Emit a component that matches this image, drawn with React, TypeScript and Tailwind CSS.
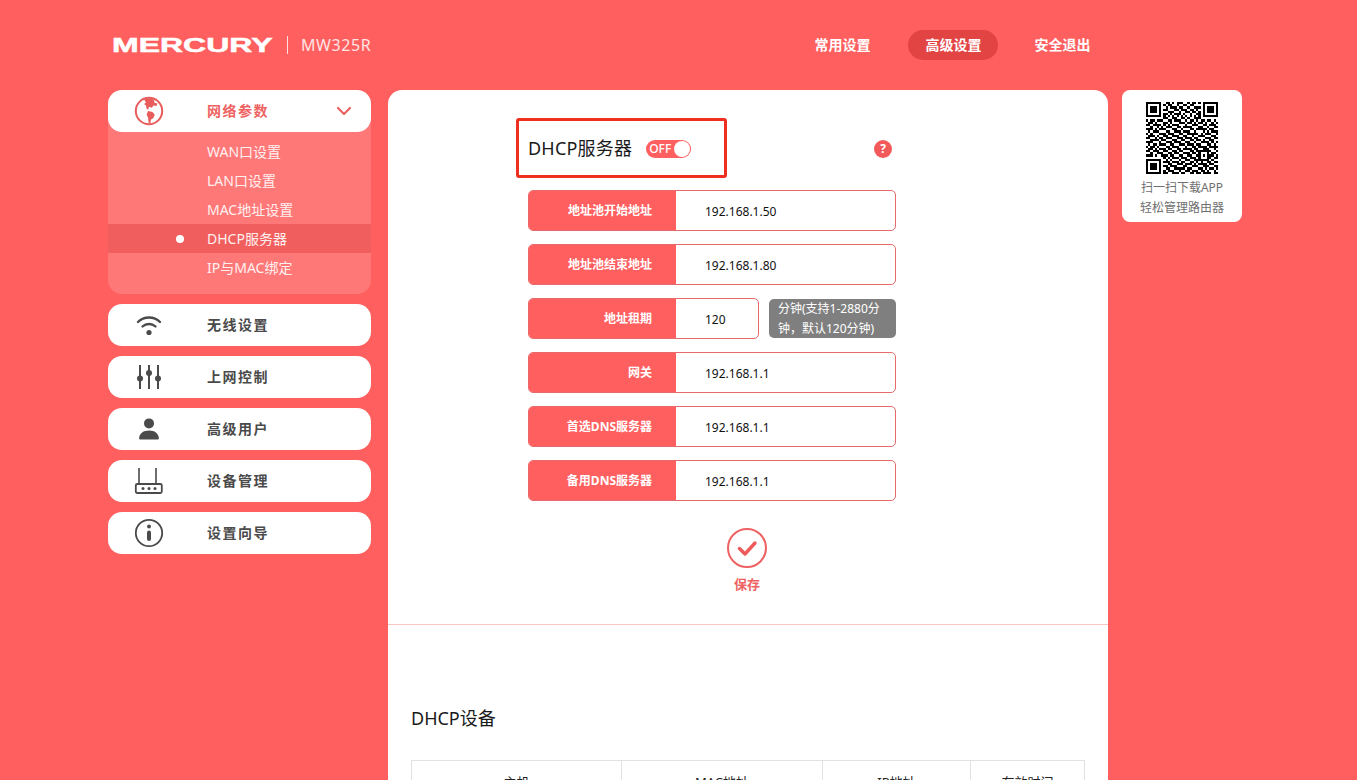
import React from 'react';
import { ChevronDown } from 'lucide-react';

const font = { fontFamily: '"Noto Sans", "Noto Sans CJK SC", sans-serif' };

const GlobeIcon = () => (
    <svg width="30" height="30" viewBox="0 0 30 30" fill="none">
        <circle cx="15" cy="15" r="13.2" stroke="#e85c5c" strokeWidth="2" />
        <path d="M10 3.500c3-1.200 7-1.400 10 .2l.5 3 3 .8-1 2.500-3-.5-1.700 2.300-2.800-1-.8 3-1.700-1.200-.5-3.200L10 8l2-1.500z" fill="#e85c5c" />
        <path d="M14 15l4.500 1 2.300 2.800-1.600 3.500-2.200 1.200-.6 3.600-1.700-.2-.7-5.500-1.400-2.600z" fill="#e85c5c" />
    </svg>
);

const WifiIcon = () => (
    <svg width="26" height="22" viewBox="0 0 26 22" fill="none" stroke="#4a4a4a" strokeWidth="2.4" strokeLinecap="round">
        <path d="M2 8c6-6 16-6 22 0" />
        <path d="M6.5 12.5c3.6-3.4 9.4-3.4 13 0" />
        <circle cx="13" cy="18.5" r="2.6" fill="#4a4a4a" stroke="none" />
    </svg>
);

const SlidersIcon = () => (
    <svg width="26" height="26" viewBox="0 0 26 26" fill="#4a4a4a">
        <rect x="3" y="1" width="2" height="24" />
        <rect x="12" y="1" width="2" height="24" />
        <rect x="21" y="1" width="2" height="24" />
        <circle cx="4" cy="14.5" r="3" />
        <circle cx="13" cy="9" r="3" />
        <circle cx="22" cy="14.5" r="3" />
    </svg>
);

const UserIcon = () => (
    <svg width="20" height="22" viewBox="0 0 20 22" fill="#4a4a4a">
        <circle cx="10" cy="5.4" r="5" />
        <path d="M1 21.5c-.8 0-1-.8-.8-2 .6-4.2 4-7 9.800-7s9.200 2.800 9.800 7c.2 1.200 0 2-.8 2z" />
    </svg>
);

const RouterIcon = () => (
    <svg width="30" height="28" viewBox="0 0 30 28" fill="none">
        <path d="M5 1v16M22 1v16" stroke="#4a4a4a" strokeWidth="1.6" />
        <rect x="1.800" y="17" width="26" height="9" rx="1.500" stroke="#4a4a4a" strokeWidth="1.800" />
        <circle cx="9" cy="21.500" r="1.500" fill="#4a4a4a" />
        <circle cx="15" cy="21.500" r="1.500" fill="#4a4a4a" />
        <circle cx="21" cy="21.500" r="1.500" fill="#4a4a4a" />
    </svg>
);

const InfoIcon = () => (
    <svg width="30" height="30" viewBox="0 0 30 30" fill="none">
        <circle cx="15" cy="15" r="13.200" stroke="#4a4a4a" strokeWidth="1.800" />
        <circle cx="15" cy="8.500" r="1.900" fill="#4a4a4a" />
        <rect x="13" y="12.500" width="4" height="10.500" rx="2" fill="#4a4a4a" />
    </svg>
);

const QR = [
    '111111100110101110010110101111111',
    '100000101011001001101100001000001',
    '101110100101110110010011101011101',
    '101110101100011011101101001011101',
    '101110100011100100110110101011101',
    '100000101101011101001001101000001',
    '111111101010101010101010101111111',
    '000000001100110011010011100000000',
    '101101110011011100101101011011010',
    '011010001101000111011010110100101',
    '110111101010111000100111001101110',
    '001001010111001101111000110010011',
    '111010111000110010001101111101100',
    '010111000110011101110010001010111',
    '101000111011100110011111010111001',
    '011101001100111001100100111000110',
    '110010110111001110111011000111011',
    '001111011000110011001101101001100',
    '111000100111011100110010011110101',
    '010110111001100111011101100011010',
    '101101000110111000100110111101111',
    '011010111011001101111011001110010',
    '110111001100110110001101111111001',
    '001001110011011001110110100010110',
    '111010011101100110011001101011101',
    '000000001010111011101110100011011',
    '111111100101000100110011111110100',
    '100000101110111011001101010011011',
    '101110100011001110111010111101100',
    '101110101101110001100111001110011',
    '101110100110011111011000110101101',
    '100000101011100100110111011010010',
    '111111101100111011001101101111011',
];

const QrCode = () => (
    <svg width="72" height="72" viewBox="0 0 33 33" shapeRendering="crispEdges" fill="#000">
        {QR.map((row, y) =>
            row.split('').map((c, x) => (c === '1' ? <rect key={`${x}-${y}`} x={x} y={y} width="1" height="1" /> : null))
        )}
    </svg>
);

const subItems = ['WAN口设置', 'LAN口设置', 'MAC地址设置', 'DHCP服务器', 'IP与MAC绑定'];

const menus = [
    { label: '无线设置', icon: <WifiIcon /> },
    { label: '上网控制', icon: <SlidersIcon /> },
    { label: '高级用户', icon: <UserIcon /> },
    { label: '设备管理', icon: <RouterIcon /> },
    { label: '设置向导', icon: <InfoIcon /> },
];

const fields = [
    { label: '地址池开始地址', value: '192.168.1.50' },
    { label: '地址池结束地址', value: '192.168.1.80' },
    { label: '地址租期', value: '120', tip: '分钟(支持1-2880分钟，默认120分钟)' },
    { label: '网关', value: '192.168.1.1' },
    { label: '首选DNS服务器', value: '192.168.1.1' },
    { label: '备用DNS服务器', value: '192.168.1.1' },
];

const columns = [
    { label: '主机', w: 'w-[210px]' },
    { label: 'MAC地址', w: 'w-[201px]' },
    { label: 'IP地址', w: 'w-[148px]' },
    { label: '有效时间', w: 'flex-1' },
];

export default function App() {
    return (
        <div style={font} className="h-screen w-full overflow-hidden bg-[#ff5f5f]">
            <header className="flex h-[90px] items-center pl-[112px]">
                <span className="w-[160px] origin-left scale-x-[1.6] text-[20px] leading-none font-bold whitespace-nowrap text-white [-webkit-text-stroke:0.5px_white]" style={{ fontFamily: '"Liberation Sans", sans-serif' }}>
                    MERCURY
                </span>
                <span className="ml-[15px] h-[18px] w-px bg-white/80" />
                <span className="ml-[13px] text-[16px] tracking-[0.6px] text-[#ffe4e4]">MW325R</span>
                <nav className="ml-[443px] flex items-center text-[14px] font-bold text-white">
                    <span className="pb-[2px]">常用设置</span>
                    <span className="mr-[36px] ml-[38px] flex h-[30px] w-[90px] items-center justify-center rounded-[15px] bg-[#e24444] pb-[2px]">高级设置</span>
                    <span className="pb-[2px]">安全退出</span>
                </nav>
            </header>

            <div className="ml-[108px] flex items-start">
                <aside className="flex w-[263px] flex-col gap-[10px]">
                    <div className="h-[204px] rounded-[14px] bg-[#ff7878]">
                        <div className="flex h-[42px] items-center rounded-[14px] bg-white pr-[15px]">
                            <span className="mr-[17px] flex w-[82px] justify-center"><GlobeIcon /></span>
                            <span className="flex-1 pb-[2px] text-[14px] font-bold tracking-[1.5px] text-[#ee6262]">网络参数</span>
                            <ChevronDown size={24} strokeWidth={2.2} color="#ee6262" />
                        </div>
                        <ul className="mt-[5px] text-[14px] text-[#fff0f0]">
                            {subItems.map((item) => (
                                <li key={item} className={`relative flex h-[29px] items-center pl-[99px] ${item === 'DHCP服务器' ? 'bg-[#f05e5e]' : ''}`}>
                                    {item === 'DHCP服务器' && <span className="absolute left-[68px] h-2 w-2 rounded-full bg-white" />}
                                    {item}
                                </li>
                            ))}
                        </ul>
                    </div>
                    {menus.map((m) => (
                        <div key={m.label} className="flex h-[42px] items-center rounded-[14px] bg-white">
                            <span className="mr-[17px] flex w-[82px] justify-center">{m.icon}</span>
                            <span className="pb-[2px] text-[14px] font-bold tracking-[1.5px] text-[#4a4a4a]">{m.label}</span>
                        </div>
                    ))}
                </aside>

                <main className="relative ml-[17px] w-[720px] rounded-t-[14px] bg-white">
                    <div className="absolute top-[28px] left-[128px] h-[60px] w-[211px] rounded-[3px] border-[3px] border-[#f0301f]" />
                    <div className="flex flex-col pl-[140px]">
                        <div className="flex h-[100px] w-[368px] items-center pt-[16px]">
                            <span className="text-[18px] tracking-[0.2px] text-[#1a1a1a]">DHCP服务器</span>
                            <span className="mt-[2px] ml-[14px] flex h-[18px] w-[45px] items-center justify-between rounded-[9px] bg-[#ff5f5f] pr-[1px] pl-[3px] text-[12px] leading-none font-medium text-white">
                                OFF
                                <span className="h-4 w-4 rounded-full bg-white" />
                            </span>
                            <span className="mt-[2px] mr-[4px] ml-auto flex h-[18px] w-[18px] items-center justify-center rounded-full bg-[#f25a5a] text-[12px] leading-none font-bold text-white">?</span>
                        </div>
                        <div className="flex w-[368px] flex-col gap-[13px]">
                            {fields.map((f) => (
                                <div key={f.label} className="flex items-start justify-between">
                                    <div className={`flex h-[41px] overflow-hidden rounded-[5px] border border-[#e96a6a] ${f.tip ? 'w-[231px]' : 'w-[368px]'}`}>
                                        <span className="flex w-[147px] shrink-0 items-center justify-end bg-[#ff5f5f] pt-[1px] pr-[24px] text-[12px] font-bold text-white">{f.label}</span>
                                        <span className="flex items-center pt-[2px] pl-[29px] text-[12px] text-[#111]">{f.value}</span>
                                    </div>
                                    {f.tip && (
                                        <div className="mt-px h-[39px] w-[127px] rounded-[5px] bg-[#7f7f7f] px-[9px] text-[12px] leading-[20px] text-white">{f.tip}</div>
                                    )}
                                </div>
                            ))}
                        </div>
                    </div>

                    <div className="mt-[27px] flex flex-col items-center pr-[2px]">
                        <svg width="40" height="40" viewBox="0 0 40 40" fill="none">
                            <circle cx="20" cy="20" r="19" stroke="#ee6262" strokeWidth="2" />
                            <path d="M12.500 20.500l5.500 5.500 10-11" stroke="#ee5a5a" strokeWidth="3.400" strokeLinecap="round" strokeLinejoin="round" />
                        </svg>
                        <span className="mt-[7px] text-[13px] leading-[18px] font-bold text-[#ee6262]">保存</span>
                    </div>

                    <div className="mt-[31px] h-px bg-[#f9c4c4]" />

                    <h3 className="mt-[80px] pl-[23px] text-[18px] leading-[26px] font-normal text-[#1a1a1a]">DHCP设备</h3>

                    <div className="mx-[23px] mt-[29px] flex h-[46px] border border-[#e2e2e2] text-[13px] text-[#222]">
                        {columns.map((c) => (
                            <div key={c.label} className={`${c.w} flex items-center justify-center border-r border-[#e2e2e2] last:border-r-0`}>{c.label}</div>
                        ))}
                    </div>
                    <div className="h-[200px]" />
                </main>

                <div className="ml-[14px] flex h-[132px] w-[120px] flex-col items-center rounded-[8px] bg-white pt-[12px]">
                    <QrCode />
                    <p className="mt-[4px] text-center text-[12px] leading-[20px] text-[#6f6f6f]">扫一扫下载APP<br />轻松管理路由器</p>
                </div>
            </div>
        </div>
    );
}
